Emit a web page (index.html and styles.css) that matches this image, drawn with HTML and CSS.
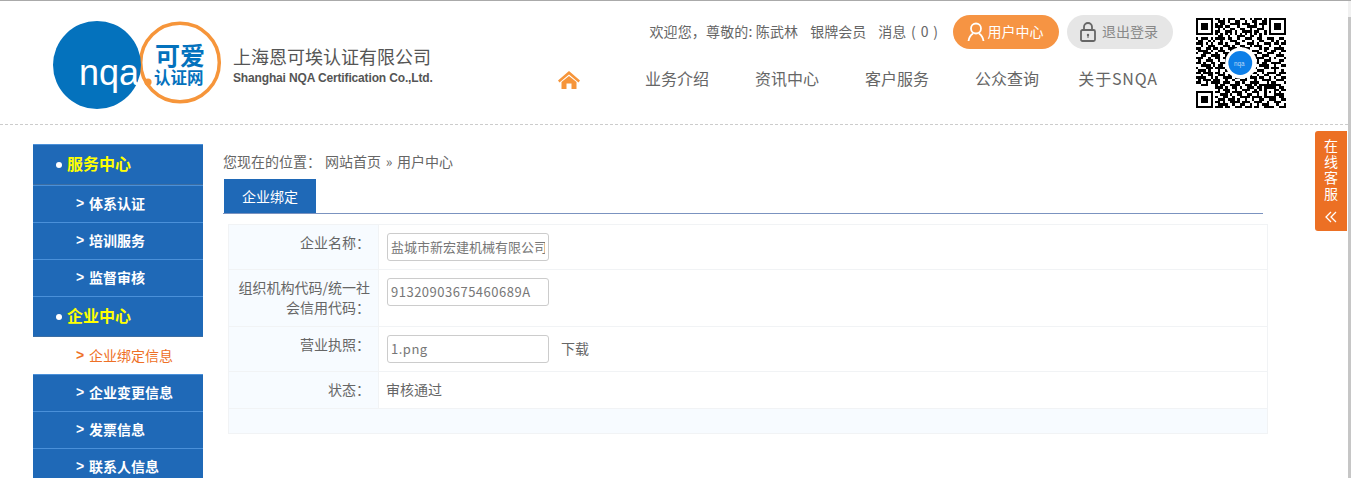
FILE: index.html
```html
<!DOCTYPE html>
<html lang="zh-CN">
<head>
<meta charset="utf-8">
<title>用户中心</title>
<link rel="stylesheet" href="styles.css">
</head>
<body>
<div class="page">
  <header class="header">
    <div class="brand">
      <svg class="logo" width="170" height="90" viewBox="0 0 170 90">
        <circle cx="127" cy="42.500" r="39.300" fill="#fff" stroke="#f6953a" stroke-width="3.500"/>
        <circle cx="44" cy="45" r="44" fill="#0472bd"/>
        <circle cx="95" cy="62" r="3.600" fill="#f6953a"/>
        <text class="logo-nqa" x="26" y="65">nqa</text>
        <text class="logo-big" x="102" y="45">可爱</text>
        <text class="logo-small" x="101" y="64">认证网</text>
      </svg>
      <div class="brand-text">
        <div class="brand-cn">上海恩可埃认证有限公司</div>
        <div class="brand-en">Shanghai NQA Certification Co.,Ltd.</div>
      </div>
    </div>
    <div class="head-right">
      <div class="userbar">
        <span class="welcome">欢迎您，尊敬的: 陈武林</span>
        <span>银牌会员</span>
        <span class="msg">消息 ( 0 )</span>
        <a class="pill pill-orange">
          <svg width="18" height="20" viewBox="0 0 18 20" fill="none" stroke="#fff" stroke-width="1.800"><circle cx="9" cy="6.500" r="5"/><path d="M1.500 19c.5-4 3-6.500 4.500-7.500M16.500 19c-.5-4-3-6.500-4.500-7.500"/></svg>
          <span>用户中心</span>
        </a>
        <a class="pill pill-gray">
          <svg width="16" height="20" viewBox="0 0 16 20" fill="none" stroke="#666" stroke-width="1.800"><rect x="1" y="8" width="14" height="11" rx="1.500"/><path d="M4 8V5a4 4 0 0 1 8 0v3"/><circle cx="8" cy="13" r="1.200" fill="#666" stroke="none"/><path d="M8 13.500v2.500" stroke-width="1"/></svg>
          <span>退出登录</span>
        </a>
      </div>
      <nav class="nav">
        <a class="nav-item nav-home">
          <svg width="22" height="18" viewBox="0 0 22 18" fill="#f6953a"><path d="M11 0 22 9.500 20.500 11.500 11 3.500 1.500 11.500 0 9.500z"/><path d="M3.500 11 11 5l7.500 6v7h-5v-5.500h-5V18h-5z"/></svg>
        </a>
        <a class="nav-item">业务介绍</a>
        <a class="nav-item">资讯中心</a>
        <a class="nav-item">客户服务</a>
        <a class="nav-item">公众查询</a>
        <a class="nav-item nav-latin">关于SNQA</a>
      </nav>
    </div>
    <svg class="qr" width="90" height="90" viewBox="0 0 37 37" shape-rendering="crispEdges">
      <path fill="none" stroke="#000" d="M.5.5h6v6h-6zM30.500.5h6v6h-6zM.5 30.500h6v6h-6zM28.500 28.500h4v4h-4z"/>
      <path fill="#000" d="M2 2h3v3H2zM32 2h3v3h-3zM2 32h3v3H2zM30 30h1v1h-1z"/>
      <path fill="none" stroke="#000" d="M8 .5h2M11 .5h1M13 .5h3M18 .5h2M22 .5h1M24 .5h3M28 .5h1
      M9 1.500h3M13 1.500h1M16 1.500h2M20 1.500h1M23 1.500h2M27 1.500h2
      M8 2.500h1M10 2.500h2M14 2.500h4M19 2.500h3M24 2.500h1M26 2.500h3
      M8 3.500h3M12 3.500h2M17 3.500h1M21 3.500h4M27 3.500h1
      M9 4.500h1M11 4.500h1M14 4.500h2M18 4.500h2M22 4.500h1M25 4.500h3
      M8 5.500h2M12 5.500h3M16 5.500h1M19 5.500h4M24 5.500h2M28 5.500h1
      M8 6.500h1M10 6.500h1M12 6.500h1M14 6.500h1M16 6.500h1M18 6.500h1M20 6.500h1M22 6.500h1M24 6.500h1M26 6.500h1M28 6.500h1
      M9 7.500h2M13 7.500h1M17 7.500h3M22 7.500h2M26 7.500h1
      M0 8.500h1M2 8.500h3M6 8.500h1M8 8.500h4M13 8.500h2M17 8.500h1M20 8.500h3M25 8.500h2M29 8.500h3M34 8.500h2
      M1 9.500h2M5 9.500h1M7 9.500h1M10 9.500h1M14 9.500h3M19 9.500h1M23 9.500h1M26 9.500h2M31 9.500h1M33 9.500h1M36 9.500h1
      M0 10.500h3M4 10.500h1M6 10.500h1M9 10.500h2M12 10.500h1M16 10.500h2M21 10.500h3M25 10.500h1M28 10.500h3M32 10.500h2M35 10.500h2
      M2 11.500h1M5 11.500h3M11 11.500h3M15 11.500h1M18 11.500h2M22 11.500h1M24 11.500h3M30 11.500h1M34 11.500h1
      M0 12.500h2M4 12.500h2M7 12.500h2M10 12.500h1M13 12.500h4M19 12.500h3M26 12.500h1M28 12.500h2M32 12.500h4
      M1 13.500h4M6 13.500h1M9 13.500h3M14 13.500h1M17 13.500h2M21 13.500h1M23 13.500h3M28 13.500h1M31 13.500h2M35 13.500h2
      M0 14.500h1M3 14.500h3M8 14.500h1M11 14.500h4M16 14.500h3M25 14.500h2M29 14.500h3M34 14.500h1
      M2 15.500h2M6 15.500h4M12 15.500h1M15 15.500h1M24 15.500h1M27 15.500h3M33 15.500h3
      M0 16.500h3M5 16.500h1M8 16.500h2M11 16.500h3M24 16.500h4M30 16.500h1M32 16.500h1M36 16.500h1
      M1 17.500h1M4 17.500h3M9 17.500h1M12 17.500h3M25 17.500h1M28 17.500h3M34 17.500h2
      M0 18.500h2M3 18.500h1M6 18.500h2M10 18.500h3M24 18.500h2M27 18.500h2M31 18.500h4
      M2 19.500h4M7 19.500h1M9 19.500h2M13 19.500h2M26 19.500h4M32 19.500h1M35 19.500h2
      M0 20.500h1M4 20.500h3M8 20.500h4M14 20.500h1M24 20.500h1M28 20.500h2M31 20.500h3
      M1 21.500h3M5 21.500h1M9 21.500h1M12 21.500h3M17 21.500h2M21 21.500h3M25 21.500h3M32 21.500h1M35 21.500h1
      M0 22.500h2M3 22.500h4M8 22.500h2M11 22.500h1M15 22.500h4M20 22.500h1M23 22.500h2M27 22.500h1M29 22.500h4M34 22.500h3
      M2 23.500h1M5 23.500h2M9 23.500h3M13 23.500h2M17 23.500h1M19 23.500h4M25 23.500h1M28 23.500h2M33 23.500h2
      M0 24.500h4M6 24.500h1M8 24.500h1M11 24.500h4M16 24.500h2M20 24.500h1M22 24.500h3M26 24.500h2M30 24.500h1M32 24.500h1M35 24.500h2
      M1 25.500h1M3 25.500h3M7 25.500h3M12 25.500h1M15 25.500h1M18 25.500h3M24 25.500h1M27 25.500h4M33 25.500h3
      M0 26.500h2M4 26.500h1M6 26.500h4M11 26.500h3M16 26.500h2M19 26.500h1M22 26.500h4M29 26.500h1M31 26.500h2M36 26.500h1
      M2 27.500h3M8 27.500h1M10 27.500h2M14 27.500h4M20 27.500h3M24 27.500h1M26 27.500h9
      M8 28.500h3M12 28.500h1M15 28.500h2M18 28.500h1M21 28.500h3M25 28.500h2M34 28.500h2
      M9 29.500h1M11 29.500h3M16 29.500h1M19 29.500h3M24 29.500h1M26 29.500h1M33 29.500h1M35 29.500h2
      M8 30.500h2M12 30.500h2M15 30.500h4M20 30.500h1M23 30.500h3M34 30.500h1
      M10 31.500h3M14 31.500h1M17 31.500h2M21 31.500h2M25 31.500h1M33 31.500h3
      M8 32.500h1M11 32.500h2M15 32.500h1M18 32.500h4M23 32.500h4M34 32.500h2
      M9 33.500h3M13 33.500h3M17 33.500h1M20 33.500h1M23 33.500h1M26 33.500h2M30 33.500h3M35 33.500h2
      M8 34.500h2M11 34.500h1M14 34.500h4M19 34.500h3M24 34.500h3M29 34.500h1M32 34.500h3
      M9 35.500h4M15 35.500h1M18 35.500h2M22 35.500h1M25 35.500h1M27 35.500h3M33 35.500h1M36 35.500h1
      M8 36.500h3M12 36.500h2M16 36.500h3M20 36.500h3M24 36.500h2M28 36.500h4M34 36.500h3"/>
      <g shape-rendering="auto">
        <circle cx="18.500" cy="18.500" r="6.500" fill="#fff"/>
        <circle cx="18.200" cy="18.500" r="4.900" fill="#0d7fe8"/>
        <text class="qr-nqa" x="15.600" y="19.600">nqa</text>
      </g>
    </svg>
  </header>

  <div class="content">
    <aside class="side">
      <div class="side-head">服务中心</div>
      <a class="side-item">体系认证</a>
      <a class="side-item">培训服务</a>
      <a class="side-item">监督审核</a>
      <div class="side-head">企业中心</div>
      <a class="side-item side-active">企业绑定信息</a>
      <a class="side-item">企业变更信息</a>
      <a class="side-item">发票信息</a>
      <a class="side-item">联系人信息</a>
    </aside>
    <main class="main">
      <div class="crumb">您现在的位置：<span class="crumb-links">网站首页 » 用户中心</span></div>
      <div class="tabs"><a class="tab">企业绑定</a></div>
      <table class="form">
        <tr class="row-1">
          <th>企业名称：</th>
          <td><input class="field" type="text" value="盐城市新宏建机械有限公司" readonly></td>
        </tr>
        <tr class="row-2">
          <th>组织机构代码/统一社会信用代码：</th>
          <td><input class="field field-latin" type="text" value="91320903675460689A" readonly></td>
        </tr>
        <tr class="row-3">
          <th>营业执照：</th>
          <td><input class="field field-latin" type="text" value="1.png" readonly><a class="download">下载</a></td>
        </tr>
        <tr class="row-4">
          <th>状态：</th>
          <td class="status">审核通过</td>
        </tr>
        <tr class="row-5"><td colspan="2"></td></tr>
      </table>
    </main>
  </div>

  <div class="float-service">
    <span class="float-text">在线客服</span>
    <svg width="12" height="12" viewBox="0 0 12 12" fill="none" stroke="#fff" stroke-width="1.300"><path d="M6 1 1 6l5 5M11 1 6 6l5 5"/></svg>
  </div>
  <div class="scrollbar"></div>
</div>
</body>
</html>
```

FILE: styles.css
```css
* { box-sizing: border-box; }
html, body { margin: 0; height: 478px; overflow: hidden; background: #fff; }
body { font-family: "Noto Sans CJK SC", "Liberation Sans", sans-serif; color: #666; font-size: 14px; }
a { color: inherit; text-decoration: none; }
.page { position: relative; height: 478px; overflow: hidden; border-top: 1px solid #aaa; }

.header { display: flex; height: 124px; margin-right: 3px; padding-left: 53px; border-bottom: 1px dashed #ccc; }
.brand { display: flex; width: 460px; }
.logo { margin-top: 19px; flex: none; }
.logo-nqa { font: 36px "Liberation Sans", sans-serif; fill: #fff; }
.logo-big { font: bold 25px "Noto Sans CJK SC", sans-serif; fill: #0472bd; }
.logo-small { font: bold 16.500px "Noto Sans CJK SC", sans-serif; fill: #0472bd; }
.brand-text { margin: 42px 0 0 10px; }
.brand-cn { font-size: 18px; line-height: 26px; color: #555; white-space: nowrap; }
.brand-en { margin-top: 2px; font: bold 12px/14px "Liberation Sans", sans-serif; letter-spacing: -.15px; color: #555; white-space: nowrap; }

.head-right { width: 660px; }
.userbar { display: flex; justify-content: flex-end; align-items: center; gap: 12px; height: 34px; margin-top: 14px; line-height: 34px; white-space: nowrap; }
.userbar span { margin-top: -2px; }
.userbar .welcome { letter-spacing: .15px; }
.userbar .msg { word-spacing: 1.700px; }
.pill { display: flex; align-items: center; justify-content: center; gap: 3px; width: 106px; height: 34px; padding-right: 2px; border-radius: 17px; }
.userbar .pill-orange { margin-left: 3px; margin-right: -4px; background: #f69443; color: #fff; }
.pill-gray { background: #e6e6e6; color: #888; gap: 6px; }
.nav { display: flex; margin: 14px 0 0 -1px; }
.nav-item { display: flex; align-items: center; justify-content: center; width: 110px; height: 34px; padding-bottom: 4px; font-size: 16px; color: #666; white-space: nowrap; }
.nav-home { padding: 0 0 0 3px; }
.nav-latin { padding-left: 2px; letter-spacing: .8px; }

.qr { flex: none; margin: 17px 0 0 23px; }
.qr-nqa { font: 2.600px "Liberation Sans", sans-serif; fill: #bcd9f5; }

.content { display: flex; gap: 20px; padding: 19px 0 0 33px; }
.side { width: 170px; flex: none; }
.side-head { position: relative; height: 41px; padding-left: 34px; border-top: 1px solid #4a90d9; border-bottom: 1px solid #3c6ea3; background: #1f69b7; color: #ff0; font-size: 16px; font-weight: bold; line-height: 37px; }
.side-head::before { content: ""; position: absolute; left: 23px; top: 17px; width: 6px; height: 6px; border-radius: 50%; background: #fff; }
.side-item { position: relative; display: block; height: 37px; padding-left: 56px; border-top: 1px solid #4a90d9; background: #1f69b7; color: #fff; font-weight: bold; line-height: 35px; }
.side-item::before { content: ">"; position: absolute; left: 43px; top: 0; font: bold 14px/35px "Liberation Sans", sans-serif; }
.side-active { border-top-color: #fff; background: #fff; color: #ee7026; font-weight: normal; }

.main { width: 1045px; }
.crumb { height: 35px; padding-top: 7px; line-height: 20px; white-space: pre; }
.crumb-links { margin-left: 4px; word-spacing: 1.500px; }
.tabs { width: 1040px; height: 35px; border-bottom: 1px solid #7b93c0; }
.tab { display: block; width: 92px; height: 34px; margin-left: 1px; background: #1f69b7; color: #fff; line-height: 35px; text-align: center; }

.form { width: 1040px; margin: 10px 0 0 5px; border-collapse: collapse; table-layout: fixed; border: 1px solid #f1f3f5; }
.form tr { border-bottom: 1px solid #f1f3f5; }
.form th { width: 150px; padding: 7px 8px 0; border-right: 1px solid #f1f3f5; background: #f7fbff; font-weight: normal; line-height: 20px; text-align: right; vertical-align: top; }
.form td { padding: 8px 0 0 8px; vertical-align: top; }
.row-1 { height: 45px; }
.row-2 { height: 57px; }
.row-3 { height: 45px; }
.row-4 { height: 37px; }
.row-5 { height: 25px; background: #f7fbff; }
.field { width: 162px; height: 28px; padding: 0 3px 2px; border: 1px solid #ccc; border-radius: 3px; color: #777; font: 13px "Noto Sans CJK SC", "Liberation Sans", sans-serif; outline: none; vertical-align: top; }
.field-latin { letter-spacing: .5px; }
.download { margin-left: 12px; line-height: 26px; }
.form .status { padding: 7px 0 0 7px; line-height: 20px; }

.float-service { position: absolute; left: 1315px; top: 130px; display: flex; flex-direction: column; align-items: center; width: 32px; height: 100px; padding-top: 6px; border-radius: 3px 0 0 3px; background: #ec7024; color: #fff; }
.float-text { width: 14px; font-size: 14px; line-height: 16px; }
.float-service svg { margin-top: 10px; }
.scrollbar { position: absolute; right: 0; top: 0; width: 3px; height: 478px; background: linear-gradient(#f1f1f1 16px, #c6c6c6 16px); }
```
